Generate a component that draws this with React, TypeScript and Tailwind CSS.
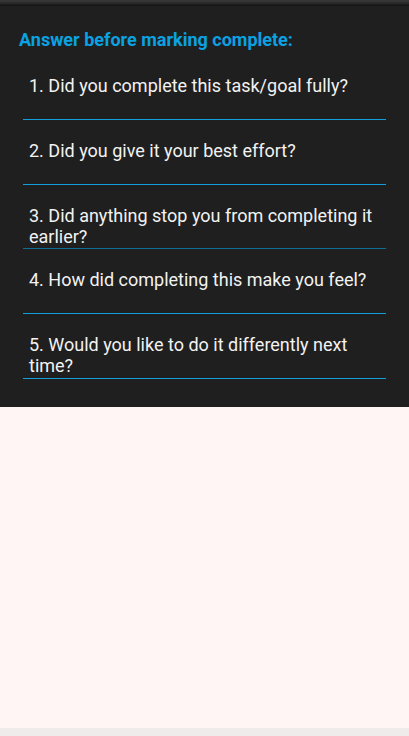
import React from "react";

const items: { text: string; line: string; h: string }[] = [
  { text: "1. Did you complete this task/goal fully?", line: "border-[#129fdc]", h: "h-[65px]" },
  { text: "2. Did you give it your best effort?", line: "border-[#129fdc]", h: "h-[65px]" },
  { text: "3. Did anything stop you from completing it earlier?", line: "border-[#0c6f93]", h: "h-[64px]" },
  { text: "4. How did completing this make you feel?", line: "border-[#129fdc]", h: "h-[65px]" },
  { text: "5. Would you like to do it differently next time?", line: "border-[#129fdc]", h: "h-[65px]" },
];

export default function App() {
  return (
    <div
      className="w-[409px] h-[736px] flex flex-col bg-[#fff5f5] overflow-hidden"
      style={{ fontFamily: "Roboto, 'Noto Sans', sans-serif" }}
    >
      <div className="bg-[#1f1f1f] flex flex-col">
        <div className="h-[6px] bg-gradient-to-b from-[#3a3a3a] via-[#2a2a2a] to-[#121212]" />
        <div className="pt-[24px] pb-[28px] flex flex-col">
          <div className="pl-[19px] h-[20px] leading-[20px] text-[18px] font-bold text-[#0aa2e2]">
            Answer before marking complete:
          </div>
          <div className="mt-[5px] mx-[23px] flex flex-col">
            {items.map((it, i) => (
              <div
                key={i}
                className={`${it.h} pt-[20px] pl-[6px] pr-[4px] border-b ${it.line}`}
              >
                <div className="text-[18px] leading-[21px] text-[#f2f2f2]">{it.text}</div>
              </div>
            ))}
          </div>
        </div>
      </div>
      <div className="flex-1" />
      <div className="h-[8px] bg-[#efebeb]" />
    </div>
  );
}
